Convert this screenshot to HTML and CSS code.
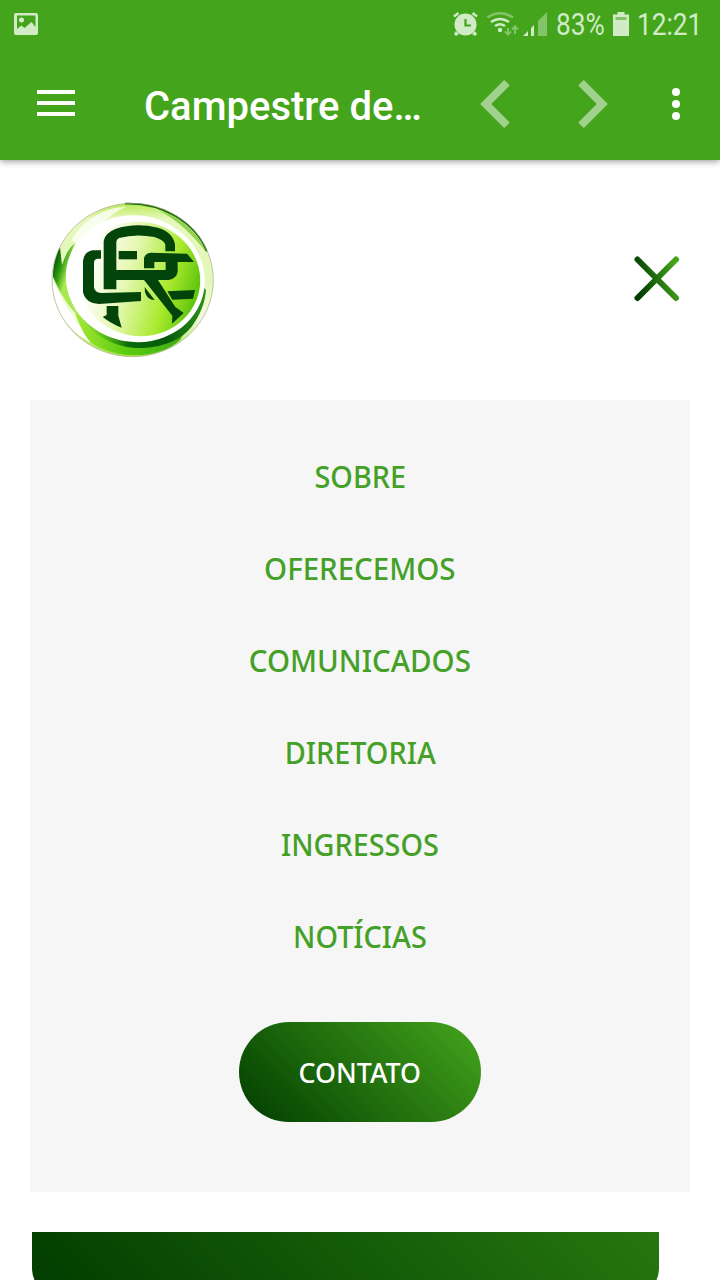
FILE: index.html
```html
<!DOCTYPE html>
<html lang="pt-BR">
<head>
<meta charset="utf-8">
<title>Campestre</title>
<link rel="stylesheet" href="styles.css">
</head>
<body>
<header class="top">
  <div class="status">
    <svg class="picture" width="24" height="22" viewBox="0 0 24 22"><path fill="#d0ebc5" fill-rule="evenodd" d="M2 0H22Q24 0 24 2V20Q24 22 22 22H2Q0 22 0 20V2Q0 0 2 0ZM3 2.500V16L7.500 12.500L10.500 15L17.500 9L21.500 14V2.500ZM7.500 4.500A2.500 2.500 0 1 1 7.500 9.500A2.500 2.500 0 1 1 7.500 4.500Z"/></svg>
    <svg class="indicators" width="98" height="28" viewBox="0 0 98 28">
      <g fill="#d0ebc5">
        <circle cx="15.500" cy="14.500" r="11"/>
        <path d="M6 21l3 3-3 2-2-2zM25 21l-3 3 3 2 2-2z"/>
        <path d="M4 6.500L8.500 3M22.500 3L27 6.500" stroke="#d0ebc5" stroke-width="2.500"/>
        <path d="M15.500 9V15.500H21" fill="none" stroke="#44a51c" stroke-width="2.200"/>
        <circle cx="50" cy="20" r="2.200"/>
        <path d="M73 26L78 21V26ZM81 26V18L84 15V26Z"/>
      </g>
      <g fill="none" stroke-width="2.500">
        <path d="M37.500 7.500Q50 -1 63 7.500" stroke="#83c46a"/>
        <path d="M41 12Q50 6 59 12M45 16Q50 12.500 55 16" stroke="#d0ebc5"/>
        <path d="M58 18V24M55 21.500L58 24.500L61 21.500M65 24V17M62 19.500L65 16.500L68 19.500" stroke="#83c46a" stroke-width="2"/>
      </g>
      <path fill="#83c46a" d="M88 26V11L97 2V26Z"/>
    </svg>
    <span class="percent"><span class="narrow">83%</span></span>
    <svg class="battery" width="16" height="24" viewBox="0 0 16 24"><path fill="#d0ebc5" d="M4.500 0H11.500V2.500H16V24H0V2.500H4.500Z"/><path fill="#83c46a" d="M2.500 5h11v3h-11z"/></svg>
    <span class="clock"><span class="narrow">12:21</span></span>
  </div>
  <div class="bar">
    <svg class="burger" width="38" height="26" viewBox="0 0 38 26"><path fill="#fff" d="M0 0H38V4H0ZM0 11H38V15H0ZM0 22H38V26H0Z"/></svg>
    <h1 class="title">Campestre de…</h1>
    <svg class="prev" width="30" height="48" viewBox="0 0 30 48"><path fill="none" stroke="#a1d28d" stroke-width="7.800" d="M27 2.700L5.700 24L27 45.300"/></svg>
    <svg class="next" width="30" height="48" viewBox="0 0 30 48"><path fill="none" stroke="#a1d28d" stroke-width="7.800" d="M3 2.700L24.300 24L3 45.300"/></svg>
    <svg class="more" width="8" height="32" viewBox="0 0 8 32"><g fill="#fff"><circle cx="4" cy="4" r="4"/><circle cx="4" cy="16" r="4"/><circle cx="4" cy="28" r="4"/></g></svg>
  </div>
</header>
<main class="page">
  <div class="brand">
    <svg class="logo" width="190" height="180" viewBox="0 0 570 540">
      <defs>
        <linearGradient id="rim" x1="0" y1="0" x2="0" y2="1"><stop offset="0" stop-color="#b7ea55"/><stop offset=".1" stop-color="#e6f8bd"/><stop offset=".5" stop-color="#e3f7b8"/><stop offset=".75" stop-color="#f2fbdc"/><stop offset="1" stop-color="#a4e43d"/></linearGradient>
        <linearGradient id="disc" x1="0" y1=".4" x2="1" y2=".5"><stop offset=".08" stop-color="#fff"/><stop offset=".4" stop-color="#e6f8b4"/><stop offset=".75" stop-color="#a9ea2e"/><stop offset="1" stop-color="#5cc30b"/></linearGradient>
        <linearGradient id="low" x1="0" y1="0" x2="1" y2="0"><stop offset="0" stop-color="#c4f06d"/><stop offset=".22" stop-color="#5fc414"/><stop offset=".42" stop-color="#0a6a0c"/><stop offset=".7" stop-color="#075a0b"/><stop offset="1" stop-color="#2f8f1a"/></linearGradient>
        <linearGradient id="base" x1="0" y1="0" x2="1" y2="0"><stop offset="0" stop-color="#a6e835"/><stop offset=".4" stop-color="#5fcf10"/><stop offset="1" stop-color="#3ba715"/></linearGradient>
        <linearGradient id="side" gradientUnits="userSpaceOnUse" x1="39" y1="230" x2="85" y2="245"><stop offset="0" stop-color="#075b0c"/><stop offset=".45" stop-color="#2c9a10"/><stop offset="1" stop-color="#a9e850"/></linearGradient>
      </defs>
      <ellipse cx="278" cy="270" rx="242" ry="230" fill="url(#rim)"/>
      <path fill="#fff" d="M37 262C60 320 95 390 150 440L153 458C85 425 34 350 37 262Z"/>
      <path fill="#fff" opacity=".75" d="M95 150C130 90 190 52 260 50C205 75 155 115 125 170Z"/>
      <path fill="url(#side)" d="M60 172C45 200 38 235 39 260C60 310 85 350 125 390L135 370C85 320 72 230 105 160C85 175 75 200 66 225Z"/>
      <path fill="none" stroke="#176d0c" stroke-width="5" d="M255 41C365 37 465 96 500 184"/>
      <path fill="#8fd34a" d="M355 61C420 78 475 130 497 185C461 139 419 94 355 61Z"/>
      <path fill="url(#base)" d="M105 370C120 410 135 440 153 458C230 510 360 508 421 449L450 390L300 430Z"/>
      <path fill="url(#low)" d="M100 355C160 450 245 478 310 474C375 470 425 448 455 410C480 375 495 340 498 300L480 280L300 420Z"/>
      <ellipse cx="286" cy="266" rx="209" ry="190" transform="rotate(10 286 266)" fill="#fff"/>
      <ellipse cx="298" cy="267" rx="183" ry="171" transform="rotate(10 298 267)" fill="url(#disc)"/>
      <ellipse cx="278" cy="270" rx="242" ry="230" fill="none" stroke="#a7a68a" stroke-width="2"/>
      <g fill="#03440b">
        <path fill-rule="evenodd" d="M191 298V153Q194 130 226 117Q285 97 354 113Q399 126 405 164V184H376V164Q373 151 343 141Q287 130 237 144Q229 148 229 156V240H377V214H413V245Q410 265 386 270H354L406 351L431 369L396 401L397 377L312 270H229V298Z"/>
        <path d="M183 181V206H172Q162 207 162 219V291Q163 308 184 309L303 306V333L177 342Q137 340 129 307V213Q132 185 158 181Z"/>
        <path d="M236 183H291V208H236Z"/>
        <path d="M312 235V204Q316 190 331 188L441 191L462 216H343V235Z"/>
        <path d="M314 291L344 330Q323 331 315 307ZM382 304L465 300L459 326L397 329Z"/>
        <path d="M200 348H235V377L245 413Q215 402 188 381L200 375Z"/>
      </g>
    </svg>
    <svg class="close" width="46" height="46" viewBox="0 0 46 46"><defs><linearGradient id="cross" gradientUnits="userSpaceOnUse" x1="3" y1="28" x2="43" y2="18"><stop stop-color="#003c00"/><stop offset="1" stop-color="#44a51c"/></linearGradient></defs><path d="M3.500 3.500L42 42M42 3.500L3.500 42" fill="none" stroke="url(#cross)" stroke-width="6" stroke-linecap="round"/></svg>
  </div>
  <nav class="menu">
    <a class="item"><span class="label">SOBRE</span></a>
    <a class="item"><span class="label wide">OFERECEMOS</span></a>
    <a class="item"><span class="label wide">COMUNICADOS</span></a>
    <a class="item"><span class="label">DIRETORIA</span></a>
    <a class="item"><span class="label">INGRESSOS</span></a>
    <a class="item"><span class="label">NOTÍCIAS</span></a>
    <a class="contact"><span class="label broad">CONTATO</span></a>
  </nav>
  <div class="banner"></div>
</main>
</body>
</html>
```
FILE: styles.css
```css
* { box-sizing: border-box; }
body { margin: 0; height: 1280px; overflow: hidden; background: #fff; font-family: "Noto Sans", sans-serif; }
.top { height: 160px; background: #44a51c; box-shadow: 0 1px 7px rgba(0, 0, 0, .45); }
.status { display: flex; height: 48px; padding-left: 14px; align-items: flex-start; color: #d0ebc5; font: 30.5px/50px Roboto, sans-serif; }
.status svg { flex: none; }
.picture { margin-top: 13px; }
.indicators { margin: 10px 0 0 412px; }
.percent { width: 48px; margin-left: 8px; }
.clock { width: 66px; margin-left: 8px; }
.narrow { display: inline-block; transform: scaleX(.86); transform-origin: left; white-space: nowrap; }
.battery { margin: 12px 0 0 9px; }
.bar { display: flex; height: 112px; padding-left: 37px; align-items: center; }
.bar svg { flex: none; }
.title { width: 289px; margin: 6px 0 0 69px; color: #fff; font: 500 40px/56px Roboto, sans-serif; white-space: nowrap; }
.burger { margin-top: -2px; }
.prev { margin-left: 47px; }
.next { margin-left: 68px; }
.more { margin-left: 64px; }
.page { padding: 30px 30px 0; }
.brand { display: flex; height: 210px; padding: 0 10px 0 10px; justify-content: space-between; }
.close { margin-top: 66px; }
.menu { display: flex; height: 792px; padding-top: 30px; flex-direction: column; align-items: center; background: #f6f6f6; }
.item { height: 92px; color: #44a026; font-size: 31px; font-weight: 500; line-height: 92px; }
.label { display: inline-block; transform: scaleX(.93); white-space: nowrap; }
.wide { transform: scaleX(.95); }
.broad { transform: scaleX(.99); }
.contact { width: 242px; height: 100px; margin-top: 40px; border-radius: 50px; background: linear-gradient(45deg, #003c00, #44a51c); color: #fff; font-size: 27px; font-weight: 500; line-height: 101px; text-align: center; }
.banner { width: 627px; height: 66px; margin: 40px 0 0 2px; border-radius: 0 0 30px 30px; background: linear-gradient(45deg, #003c00, #26770f); }
```
